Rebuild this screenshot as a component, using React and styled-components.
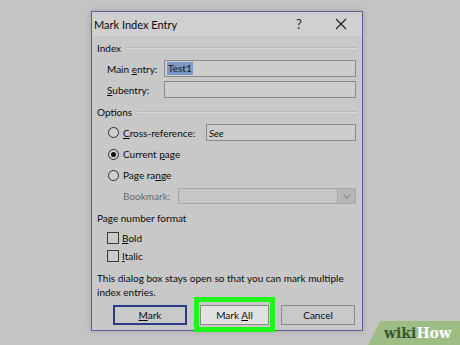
import React from 'react'
import styled, { createGlobalStyle } from 'styled-components'

const GlobalStyle = createGlobalStyle`
  html, body {
    margin: 0;
    padding: 0;
    background: #c4c4c4;
  }
  body {
    font-family: Lato, 'Noto Sans', sans-serif;
    color: #0a0a0a;
  }
`

const Page = styled.div`
  position: relative;
  width: 460px;
  height: 345px;
  overflow: hidden;
  background: #c4c4c4;
`

const Dialog = styled.div`
  margin: 11px 0 0 91px;
  width: 270px;
  height: 318px;
  border: 1px solid #5e6098;
  background: #c8c8c8;
  box-shadow: 0 0 6px rgba(0, 0, 0, 0.18);
  display: flex;
  flex-direction: column;
`

const TitleBar = styled.div`
  height: 24px;
  display: flex;
  align-items: center;
  background: #d0d0d0;
  padding-left: 2px;
`

const Title = styled.div`
  flex: 1;
  font-size: 11px;
  color: #0a0a0a;
`

const TitleButton = styled.div`
  width: 42px;
  display: flex;
  justify-content: center;
  align-items: center;
  font-size: 13px;
  color: #222;
`

const Body = styled.div`
  flex: 1;
  display: flex;
  flex-direction: column;
  padding: 0 6px 5px 5px;
`

const Row = styled.div`
  display: flex;
  align-items: center;
  height: ${p => p.h || 16}px;
  margin-top: ${p => p.mt || 0}px;
  padding-left: ${p => p.indent || 0}px;
  font-size: 10px;
`

const GroupLabel = styled.span`
  font-size: 10px;
  margin-right: 6px;
  white-space: nowrap;
`

const GroupLine = styled.div`
  flex: 1;
  height: 0;
  border-top: 1px solid #b8b8b8;
  border-bottom: 1px solid #d8d8d8;
`

const Label = styled.span`
  width: ${p => p.w || 'auto'};
  flex-shrink: 0;
  color: ${p => (p.disabled ? '#6a6a6a' : '#0a0a0a')};
  white-space: nowrap;
`

const Key = styled.span`
  text-decoration: underline;
  text-underline-offset: 1px;
`

const Input = styled.div`
  flex: 1;
  height: 15px;
  border: 1px solid #8a8a8a;
  background: #cdcdcd;
  display: flex;
  align-items: center;
  padding-left: 2px;
  font-size: 10px;
  font-style: ${p => (p.italic ? 'italic' : 'normal')};
`

const Selected = styled.span`
  background: #7b98c8;
  color: #10162a;
  padding: 0 1px;
  line-height: 13px;
`

const Select = styled.div`
  flex: 1;
  height: 14px;
  border: 1px solid #a6a6a6;
  background: #c6c6c6;
  display: flex;
  justify-content: flex-end;
`

const SelectArrow = styled.div`
  width: 17px;
  background: #b6b6b6;
  border-left: 1px solid #a6a6a6;
  display: flex;
  align-items: center;
  justify-content: center;
`

const Radio = styled.span`
  width: 9px;
  height: 9px;
  border-radius: 50%;
  border: 1px solid #2e2e2e;
  background: #cfcfcf;
  margin-right: 4px;
  display: flex;
  align-items: center;
  justify-content: center;
  flex-shrink: 0;
  &::after {
    content: '';
    width: 5px;
    height: 5px;
    border-radius: 50%;
    background: ${p => (p.checked ? '#111' : 'transparent')};
  }
`

const Check = styled.span`
  width: 10px;
  height: 10px;
  border: 1px solid #3a3a3a;
  background: #cbcbcb;
  margin-right: 3px;
  flex-shrink: 0;
`

const Note = styled.div`
  margin-top: 7px;
  font-size: 10px;
  line-height: 14px;
  white-space: nowrap;
`

const ButtonRow = styled.div`
  display: flex;
  align-items: center;
  height: 20px;
  margin-top: 6px;
  padding-left: 16px;
`

const Button = styled.div`
  width: ${p => p.w || 74}px;
  height: 20px;
  box-sizing: border-box;
  display: flex;
  align-items: center;
  justify-content: center;
  font-size: 10px;
  background: ${p => (p.light ? '#e2e2e2' : '#c9c9c9')};
  border: ${p => (p.primary ? '2px solid #2b3a86' : '1px solid #8a8a8a')};
  margin-left: ${p => p.ml || 0}px;
`

const Highlight = styled.div`
  margin: -8px 0 -7px 7px;
  border: 5px solid #1ef61a;
  padding: 3px 1px 2px;
  background: #c9c9c9;
`

const Watermark = styled.svg`
  position: absolute;
  right: 0;
  bottom: 0;
`

export default function App() {
  return (
    <Page>
      <GlobalStyle />
      <Dialog>
        <TitleBar>
          <Title>Mark Index Entry</Title>
          <TitleButton>?</TitleButton>
          <TitleButton>
            <svg width="12" height="12" viewBox="0 0 12 12">
              <path d="M1 1L11 11M11 1L1 11" stroke="#222" strokeWidth="1.2" />
            </svg>
          </TitleButton>
        </TitleBar>
        <Body>
          <Row h={14} mt={5}>
            <GroupLabel>Index</GroupLabel>
            <GroupLine />
          </Row>
          <Row h={17} mt={5} indent={10}>
            <Label w="57px">Main <Key>e</Key>ntry:</Label>
            <Input><Selected>Test1</Selected></Input>
          </Row>
          <Row h={17} mt={4} indent={10}>
            <Label w="57px"><Key>S</Key>ubentry:</Label>
            <Input />
          </Row>
          <Row h={14} mt={7}>
            <GroupLabel>Options</GroupLabel>
            <GroupLine />
          </Row>
          <Row h={17} mt={5} indent={11}>
            <Radio />
            <Label w="83px"><Key>C</Key>ross-reference:</Label>
            <Input italic>See</Input>
          </Row>
          <Row mt={5} indent={11}>
            <Radio checked />
            <Label>Current <Key>p</Key>age</Label>
          </Row>
          <Row mt={5} indent={11}>
            <Radio />
            <Label>Page ra<Key>n</Key>ge</Label>
          </Row>
          <Row mt={5} indent={26}>
            <Label w="55px" disabled>Bookmark:</Label>
            <Select>
              <SelectArrow>
                <svg width="8" height="5" viewBox="0 0 8 5">
                  <path d="M0.5 0.5L4 4L7.5 0.5" fill="none" stroke="#8c8c8c" strokeWidth="1.2" />
                </svg>
              </SelectArrow>
            </Select>
          </Row>
          <Row h={14} mt={7}>
            <GroupLabel>Page number format</GroupLabel>
          </Row>
          <Row mt={5} indent={10}>
            <Check />
            <Label><Key>B</Key>old</Label>
          </Row>
          <Row mt={2} indent={10}>
            <Check />
            <Label><Key>I</Key>talic</Label>
          </Row>
          <Note>
            This dialog box stays open so that you can mark multiple
            <br />
            index entries.
          </Note>
          <ButtonRow>
            <Button primary><span><Key>M</Key>ark</span></Button>
            <Highlight>
              <Button light w={69}><span>Mark <Key>A</Key>ll</span></Button>
            </Highlight>
            <Button ml={6}>Cancel</Button>
          </ButtonRow>
        </Body>
      </Dialog>
      <Watermark width="92" height="24" viewBox="0 0 92 24">
        <polygon points="12,0 92,0 92,24 0,24" fill="#9dbd85" />
        <text x="16" y="17" fontFamily="'DejaVu Serif', serif" fontWeight="bold" fontSize="14">
          <tspan fill="#3b5730">wiki</tspan>
          <tspan fill="#ffffff">How</tspan>
        </text>
      </Watermark>
    </Page>
  )
}
